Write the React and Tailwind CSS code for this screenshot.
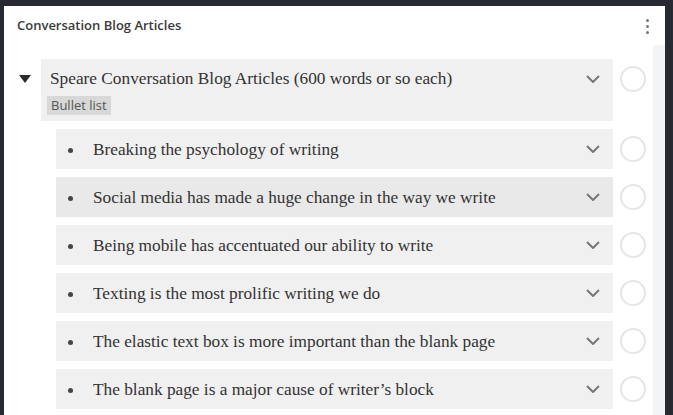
import { useState } from 'react'

// ITEMS UNDER THE PARENT BULLET LIST
const items = [
    'Breaking the psychology of writing',
    'Social media has made a huge change in the way we write',
    'Being mobile has accentuated our ability to write',
    'Texting is the most prolific writing we do',
    'The elastic text box is more important than the blank page',
    'The blank page is a major cause of writer\u2019s block',
]

const Chevron = () => (
    <svg width="14" height="8" viewBox="0 0 14 8" fill="none" className="shrink-0">
        <path d="M1 1l6 6 6-6" stroke="#777" strokeWidth="2" />
    </svg>
)

const Circle = () => (
    <div className="w-[26px] h-[26px] rounded-full border-2 border-[#e6e6e6] bg-white shrink-0" />
)

const App = () => {
    const [hovered] = useState(1)

    return (
        <div className="w-[673px] h-[415px] bg-[#282a33] pt-[6px] pl-[4px] pr-[8px] overflow-hidden" style={{ fontFamily: '"Open Sans", sans-serif' }}>
            <div className="bg-white h-full flex flex-col">

                {/* HEADER */}
                <div className="flex items-center justify-between h-[39px] pl-[13px] pr-[16px]">
                    <span className="text-[13px] font-semibold text-[#3a3a3a]">Conversation Blog Articles</span>
                    <div className="flex flex-col gap-[3px] mt-[1px]">
                        <span className="w-[3px] h-[3px] rounded-full bg-[#777]" />
                        <span className="w-[3px] h-[3px] rounded-full bg-[#777]" />
                        <span className="w-[3px] h-[3px] rounded-full bg-[#777]" />
                    </div>
                </div>

                <div className="flex flex-1">
                    {/* LIST */}
                    <div className="flex-1 pt-[14px]" style={{ fontFamily: '"Liberation Serif", serif' }}>

                        {/* PARENT ROW */}
                        <div className="flex items-start">
                            <div className="w-[37px] pl-[15px] pt-[16px]">
                                <svg width="12" height="8" viewBox="0 0 12 8"><path d="M0 0h12L6 8z" fill="#2b2b2b" /></svg>
                            </div>
                            <div className="w-[572px] h-[62px] bg-[#f0f0f0] pl-[9px] pr-[13px] pt-[10px]">
                                <div className="flex items-center justify-between">
                                    <span className="text-[17.3px] leading-[20px] text-[#333]">Speare Conversation Blog Articles (600 words or so each)</span>
                                    <Chevron />
                                </div>
                                <span className="inline-block mt-[7px] -ml-[3px] bg-[#d8d8d8] px-[4px] h-[19px] leading-[19px] text-[13px] text-[#555]" style={{ fontFamily: '"Open Sans", sans-serif' }}>Bullet list</span>
                            </div>
                            <div className="pl-[7px] pt-[7px]"><Circle /></div>
                        </div>

                        {/* CHILD ROWS */}
                        <div className="flex flex-col gap-[8px] mt-[8px]">
                            {items.map((text, i) => (
                                <div key={i} className="flex items-center">
                                    <div className={`ml-[52px] w-[557px] h-[40px] flex items-center justify-between pr-[13px] ${i === hovered ? 'bg-[#e9e9e9]' : 'bg-[#f0f0f0]'}`}>
                                        <div className="flex items-center pt-[2px]">
                                            <span className="ml-[12px] mr-[20px] w-[5px] h-[5px] rounded-full bg-[#444]" />
                                            <span className="text-[17.3px] text-[#333]">{text}</span>
                                        </div>
                                        <Chevron />
                                    </div>
                                    <div className="pl-[7px]"><Circle /></div>
                                </div>
                            ))}
                        </div>
                    </div>

                    {/* SCROLL TRACK */}
                    <div className="w-[12px] bg-[#f3f4f6]" />
                </div>
            </div>
        </div>
    )
}

export default App
